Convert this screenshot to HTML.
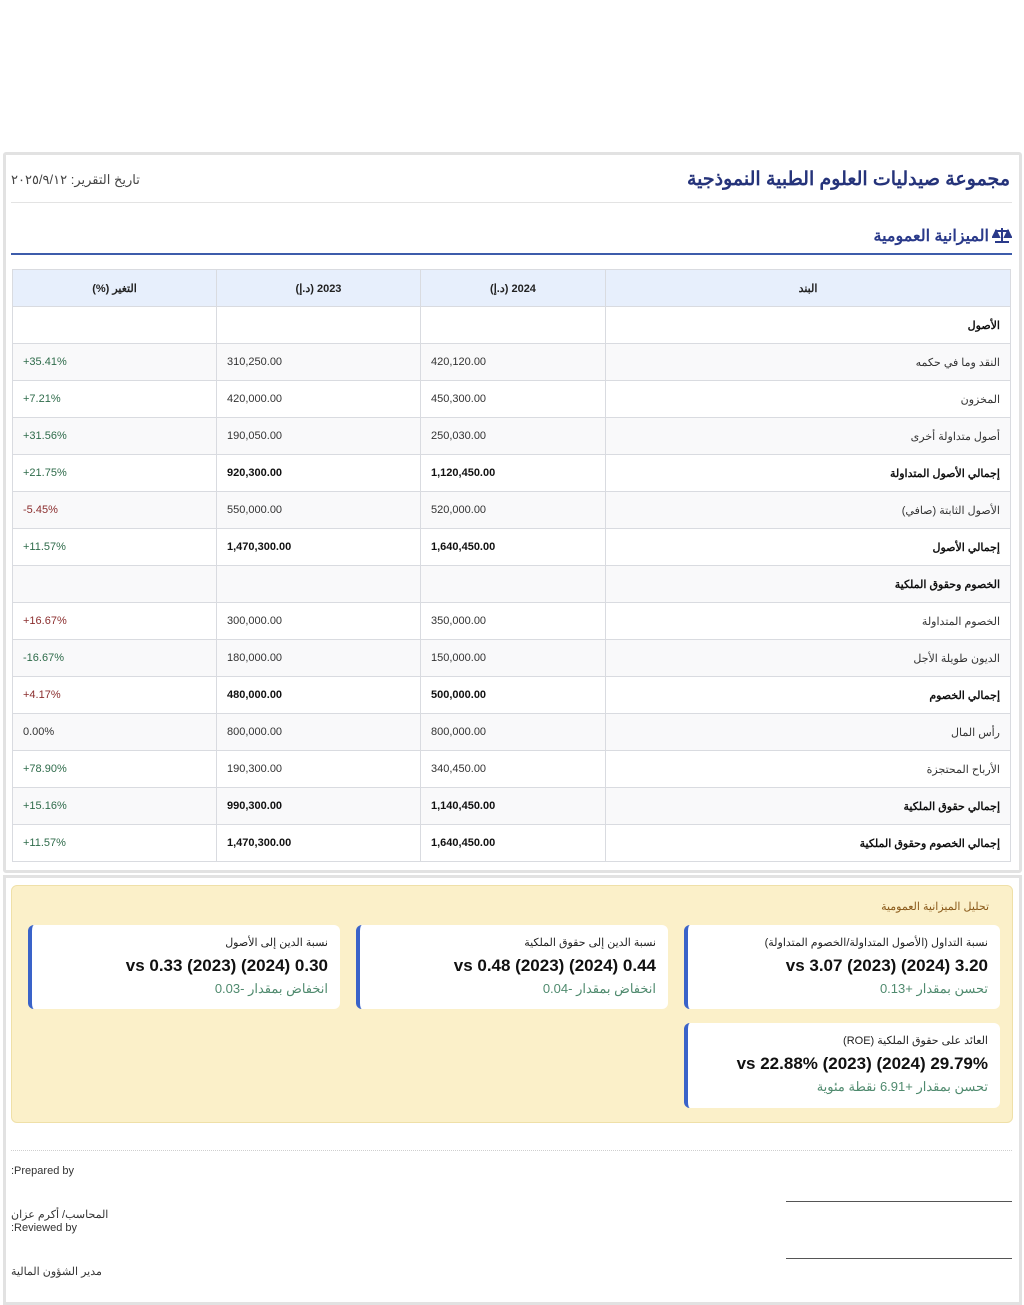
<!DOCTYPE html>
<html><head><meta charset="utf-8">
<style>
*{box-sizing:border-box;margin:0;padding:0}
body{width:1024px;height:1289px;background:#fff;font-family:"Liberation Sans","Noto Sans CJK SC",sans-serif;position:relative;overflow:hidden;color:#333}
.a{position:absolute}
.card1{left:3px;top:152px;width:1019px;height:721px;border:3px solid #e2e2e2;border-radius:3px}
.card2{left:3px;top:875px;width:1019px;height:430px;border:3px solid #e2e2e2}
table{position:absolute;left:12px;top:269px;width:999px;border-collapse:collapse;direction:rtl;font-size:11px}
td,th{border:1px solid #d9dbe0;height:37px;padding:0 10px;text-align:right}
td.n{direction:ltr;text-align:left}
th{background:#e7effc;text-align:center;font-weight:bold;color:#222}
tr:nth-child(odd) td{background:#f9f9fa}
tr.w td{background:#fff}
.b{font-weight:bold;color:#111}
.g{color:#2e6b4a}.r{color:#8b2e2e}
.c{direction:ltr;text-align:left}
.yb{left:11px;top:885px;width:1002px;height:238px;background:#fbf0c9;border:1px solid #efe0a8;border-radius:6px}
.k{position:absolute;background:#fff;border-radius:6px;border-left:4px solid #3a63c9;direction:rtl;text-align:right;padding:11px 12px 0 12px}
.k .t{font-size:11px;color:#222}
.k .v{font-size:17px;font-weight:bold;color:#111;margin-top:7px;direction:ltr;text-align:right}
.k .s{font-size:13px;color:#4f8a6e;margin-top:5px}
</style></head><body>
<div class="a card1"></div>
<div class="a" style="right:14px;top:168px;font-size:19px;color:#25337a;direction:rtl;font-weight:bold">مجموعة صيدليات العلوم الطبية النموذجية</div>
<div class="a" style="left:11px;top:172px;font-size:13px;color:#444;direction:rtl">تاريخ التقرير: ٢٠٢٥/٩/١٢</div>
<div class="a" style="left:11px;top:202px;width:1001px;height:1px;background:#e3e3e3"></div>
<div class="a" style="right:12px;top:226px;font-size:16px;color:#2a3a8a;font-weight:bold;direction:rtl">
<svg width="20" height="16" viewBox="0 0 20 16" style="vertical-align:-2px;margin-left:3px"><g fill="none" stroke="#2a3a8a" stroke-width="2"><path d="M10 1v13M3 15h14M3 4h14"/><path d="M1 10l3-6 3 6zM13 10l3-6 3 6z" fill="#2a3a8a"/></g></svg>الميزانية العمومية</div>
<div class="a" style="left:11px;top:253px;width:1001px;height:2px;background:#3d5cab"></div>
<table>
<tr><th style="width:405px">البند</th><th style="width:185px">2024 (د.إ)</th><th style="width:204px">2023 (د.إ)</th><th>التغير (%)</th></tr>
<tr class="w"><td class="b">الأصول</td><td></td><td></td><td></td></tr>
<tr><td>النقد وما في حكمه</td><td class="n">420,120.00</td><td class="n">310,250.00</td><td class="c g">+35.41%</td></tr>
<tr class="w"><td>المخزون</td><td class="n">450,300.00</td><td class="n">420,000.00</td><td class="c g">+7.21%</td></tr>
<tr><td>أصول متداولة أخرى</td><td class="n">250,030.00</td><td class="n">190,050.00</td><td class="c g">+31.56%</td></tr>
<tr class="w"><td class="b">إجمالي الأصول المتداولة</td><td class="n b">1,120,450.00</td><td class="n b">920,300.00</td><td class="c g">+21.75%</td></tr>
<tr><td>الأصول الثابتة (صافي)</td><td class="n">520,000.00</td><td class="n">550,000.00</td><td class="c r">-5.45%</td></tr>
<tr class="w"><td class="b">إجمالي الأصول</td><td class="n b">1,640,450.00</td><td class="n b">1,470,300.00</td><td class="c g">+11.57%</td></tr>
<tr><td class="b">الخصوم وحقوق الملكية</td><td></td><td></td><td></td></tr>
<tr class="w"><td>الخصوم المتداولة</td><td class="n">350,000.00</td><td class="n">300,000.00</td><td class="c r">+16.67%</td></tr>
<tr><td>الديون طويلة الأجل</td><td class="n">150,000.00</td><td class="n">180,000.00</td><td class="c g">-16.67%</td></tr>
<tr class="w"><td class="b">إجمالي الخصوم</td><td class="n b">500,000.00</td><td class="n b">480,000.00</td><td class="c r">+4.17%</td></tr>
<tr><td>رأس المال</td><td class="n">800,000.00</td><td class="n">800,000.00</td><td class="c">0.00%</td></tr>
<tr class="w"><td>الأرباح المحتجزة</td><td class="n">340,450.00</td><td class="n">190,300.00</td><td class="c g">+78.90%</td></tr>
<tr><td class="b">إجمالي حقوق الملكية</td><td class="n b">1,140,450.00</td><td class="n b">990,300.00</td><td class="c g">+15.16%</td></tr>
<tr class="w"><td class="b">إجمالي الخصوم وحقوق الملكية</td><td class="n b">1,640,450.00</td><td class="n b">1,470,300.00</td><td class="c g">+11.57%</td></tr>
</table>
<div class="a card2"></div>
<div class="a yb"></div>
<div class="a" style="right:35px;top:900px;font-size:11px;color:#8a5a1a;direction:rtl">تحليل الميزانية العمومية</div>
<div class="k" style="left:684px;top:925px;width:316px;height:84px"><div class="t">نسبة التداول (الأصول المتداولة/الخصوم المتداولة)</div><div class="v">vs 3.07 (2023) (2024) 3.20</div><div class="s">تحسن بمقدار +0.13</div></div>
<div class="k" style="left:356px;top:925px;width:312px;height:84px"><div class="t">نسبة الدين إلى حقوق الملكية</div><div class="v">vs 0.48 (2023) (2024) 0.44</div><div class="s">انخفاض بمقدار -0.04</div></div>
<div class="k" style="left:28px;top:925px;width:312px;height:84px"><div class="t">نسبة الدين إلى الأصول</div><div class="v">vs 0.33 (2023) (2024) 0.30</div><div class="s">انخفاض بمقدار -0.03</div></div>
<div class="k" style="left:684px;top:1023px;width:316px;height:85px"><div class="t">العائد على حقوق الملكية (ROE)</div><div class="v">vs 22.88% (2023) (2024) 29.79%</div><div class="s">تحسن بمقدار +6.91 نقطة مئوية</div></div>
<div class="a" style="left:11px;top:1150px;width:1001px;border-top:1px dotted #cfcfcf"></div>
<div class="a" style="left:11px;top:1165px;font-size:11px;color:#333">:Prepared by</div>
<div class="a" style="left:11px;top:1208px;font-size:11px;color:#333;direction:rtl">المحاسب/ أكرم عزان</div>
<div class="a" style="left:11px;top:1222px;font-size:11px;color:#333">:Reviewed by</div>
<div class="a" style="left:11px;top:1265px;font-size:11px;color:#333;direction:rtl">مدير الشؤون المالية</div>
<div class="a" style="left:786px;top:1201px;width:226px;height:1px;background:#555"></div>
<div class="a" style="left:786px;top:1258px;width:226px;height:1px;background:#555"></div>
</body></html>
